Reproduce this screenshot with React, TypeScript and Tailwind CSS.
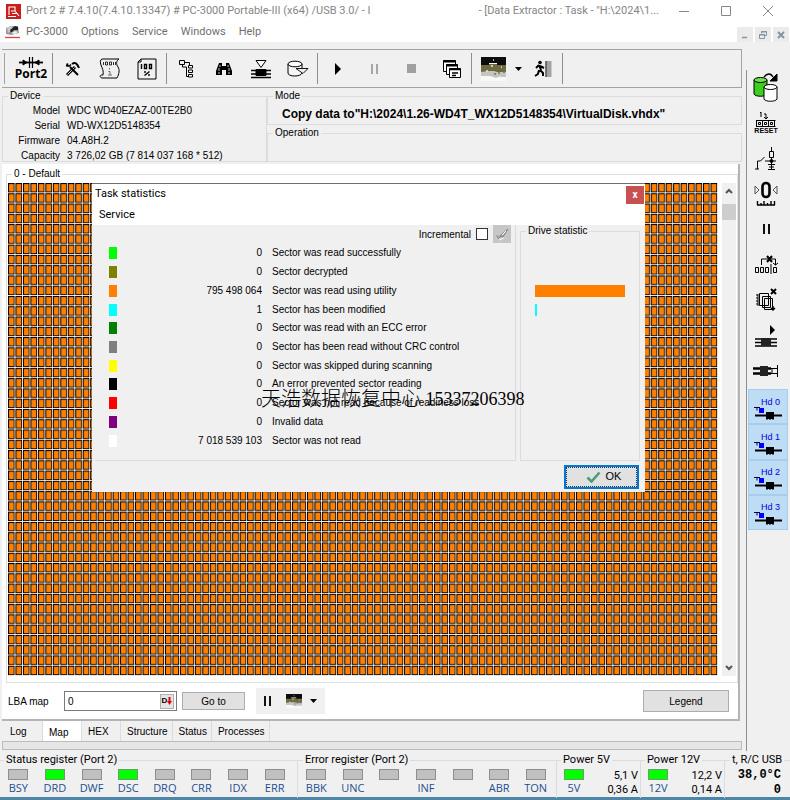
import React, { useState } from 'react';

const toolFont = 'font-["Liberation_Sans",Arial,sans-serif] text-[10px]';
const uiFont = 'font-[Roboto,"Segoe_UI",sans-serif] text-[11px]';

const sectors = [
  { color: 'bg-[#00ff00]', count: '0', label: 'Sector was read successfully' },
  { color: 'bg-[#808000]', count: '0', label: 'Sector decrypted' },
  { color: 'bg-[#ff8000]', count: '795 498 064', label: 'Sector was read using utility', bar: 'w-[90px]' },
  { color: 'bg-[#00ffff]', count: '1', label: 'Sector has been modified', bar: 'w-[2px]' },
  { color: 'bg-[#008000]', count: '0', label: 'Sector was read with an ECC error' },
  { color: 'bg-[#808080]', count: '0', label: 'Sector has been read without CRC control' },
  { color: 'bg-[#ffff00]', count: '0', label: 'Sector was skipped during scanning' },
  { color: 'bg-black', count: '0', label: 'An error prevented sector reading' },
  { color: 'bg-[#ff0000]', count: '0', label: 'Sector was not read because of readiness loss' },
  { color: 'bg-[#800080]', count: '0', label: 'Invalid data' },
  { color: 'bg-white', count: '7 018 539 103', label: 'Sector was not read' },
];

const device = [
  ['Model', 'WDC WD40EZAZ-00TE2B0'],
  ['Serial', 'WD-WX12D5148354'],
  ['Firmware', '04.A8H.2'],
  ['Capacity', '3 726,02 GB (7 814 037 168 * 512)'],
];

const statusBits = ['BSY', 'DRD', 'DWF', 'DSC', 'DRQ', 'CRR', 'IDX', 'ERR'];
const errorBits = ['BBK', 'UNC', '', 'INF', '', 'ABR', 'TON'];
const tabs = ['Log', 'Map', 'HEX', 'Structure', 'Status', 'Processes'];

function Svg({ w, h, children }: { w: number; h: number; children: React.ReactNode }) {
  return (
    <svg width={w} height={h} viewBox={`0 0 ${w} ${h}`} fill="none" stroke="#000" className="shrink-0" aria-hidden="true">
      {children}
    </svg>
  );
}

const AppIcon = () => (
  <Svg w={15} h={15}>
    <rect width="15" height="15" fill="#c81e1e" stroke="none" />
    <path d="M3 11V3h6v4H5M2 12.500h8M9 7l4 5M6 9.500h5" stroke="#fff" strokeWidth="1.1" />
  </Svg>
);

const DriveIcon = () => (
  <Svg w={16} h={14}>
    <path d="M1 3l5-2 7 0 1 7-8 2-5-1z" fill="#999" stroke="none" />
    <path d="M2 3l5-2 1 3-5 4z" fill="#ccc" stroke="none" />
    <path d="M5 5l5-4 3 1 0 3-4 0-3 3z" fill="#222" stroke="none" />
    <path d="M6 8l4-2 3 1-3 2z" fill="#eee" stroke="none" />
    <path d="M0 12.500h15" stroke="#e04040" strokeWidth="1.3" />
  </Svg>
);

const Port2Icon = () => (
  <Svg w={26} h={11}>
    <path d="M1 5.500h24" strokeWidth="1.8" />
    <path d="M5 3l4 2.500-4 2.500zM21 3l-4 2.500 4 2.500z" fill="#000" />
    <path d="M11.500 0v11M14.500 0v11" strokeWidth="1.2" />
  </Svg>
);

const ToolsIcon = () => (
  <Svg w={16} h={16}>
    <path d="M2 14l8-8" strokeWidth="3" />
    <path d="M2.500 13.500l7-7" stroke="#ddd" />
    <path d="M5 6l8 8" strokeWidth="2" />
    <path d="M1.500 5.500l1-3v2.500h2l1.500-1.500" strokeWidth="1.6" />
    <path d="M7 3c3-2 5-1 7 4" strokeWidth="2" />
  </Svg>
);

const ScrollIcon = () => (
  <Svg w={22} h={22}>
    <path d="M3 1h17c-3 2-3 5-1 8s1 7-1 11H3c-3-1-2-3 0-3h1c1-4-1-7-2-10S1 2 3 1z" />
    <path d="M4.500 4v3M6.500 4h2v3h-2zM10.500 4h2v3h-2zM14.500 4v3M16.500 4v3" strokeWidth=".8" />
    <path d="M10.500 10v1.500M9.500 13.500h1.500v3M9 17h4" stroke="#666" />
  </Svg>
);

const PercentIcon = () => (
  <Svg w={20} h={22}>
    <path d="M4 1h15v20H1V4z" />
    <path d="M1 4h3V1" />
    <path d="M4.500 6v5M7.500 6.500h2v4h-2zM12.500 6.500h2v4h-2z" strokeWidth="1.400" />
    <path d="M7.500 17.500l5-4M8 13v2M12 16v2" strokeWidth="1.400" />
  </Svg>
);

const TreeIcon = () => (
  <Svg w={17} h={19}>
    <path d="M1.500 1.500h5v4h-5zM4.500 5.500v2.500h4M8.500 8v9.500h2" />
    <path d="M10.500 6.500h4v2.500h-4zM10.500 11h4v2.500h-4zM10.500 15.500h4v2.500h-4z" fill="#fff" />
    <path d="M7 3.500h4.500V6" />
  </Svg>
);

const BinocularsIcon = () => (
  <Svg w={16} h={14}>
    <path d="M3 1h3v3h4V1h3l3 8v4h-6V8H6v5H0V9z" fill="#000" stroke="none" />
    <path d="M4 3v2M3 6v3M12 3v2M13 6v3M2 11h2M12 11h2" stroke="#ddd" strokeWidth=".9" />
  </Svg>
);

const FilterIcon = () => (
  <Svg w={22} h={20}>
    <path d="M6 1.500h10l-5 7z" fill="#fff" />
    <path d="M1 11.500h20M1 15h20M1 18.500h20" strokeWidth="1.700" />
    <path d="M6 10.500h10v6H6z" fill="#000" />
  </Svg>
);

const DbIcon = () => (
  <Svg w={22} h={17}>
    <path d="M1 4v9c0 4 13 4 14 0V4" fill="#f6f6f6" />
    <ellipse cx="8" cy="4" rx="7" ry="2.800" fill="#fff" />
    <path d="M9 8.500h12l-5 5z" fill="#eee" strokeWidth=".9" />
  </Svg>
);

const WindowsIcon = () => (
  <Svg w={19} h={20}>
    <path d="M1.500 1.500h12v11h-12z" fill="#fff" />
    <path d="M1 2.500h13" strokeWidth="2" />
    <path d="M4.500 5.500h11v10h-11z" fill="#fff" />
    <path d="M4 6.500h12" strokeWidth="2" />
    <path d="M7.500 9.500h11v9h-11z" fill="#fff" />
    <path d="M7 10.500h12M10 14h6M10 16.500h4" strokeWidth="1.500" />
  </Svg>
);

function PhotoIcon({ w, h }: { w: number; h: number }) {
  return (
    <svg width={w} height={h} viewBox="0 0 25 24" preserveAspectRatio="none" className="shrink-0" aria-hidden="true">
      <path d="M0 0h25v24H0z" fill="#f8f8f8" />
      <path d="M0 12h25v8h-8l-2 1-6-2H0z" fill="#c4c4c0" />
      <path d="M0 7h25v8h-9l-3-1H8l-8 1z" fill="#6d6a42" />
      <path d="M0 0h25v8h-9V6H8v2H0z" fill="#0c0c0c" />
      <path d="M5 14h2M10 9h2M12 3h1M20 10h1M18 20h2" stroke="#e8e8e8" strokeWidth="1.5" />
      <path d="M13 17h2M22 15h2M17 16h2" stroke="#77745a" strokeWidth="1.5" />
    </svg>
  );
}

const ExitIcon = () => (
  <Svg w={18} h={18}>
    <circle cx="6" cy="2.500" r="1.800" fill="#000" stroke="none" />
    <path d="M5 5l-3 3M5 5l2 5M6 6l4 2M6 10l3 3v3M5 10l-1 4-3 2" strokeWidth="2" />
    <path d="M12.500 1h5v16h-5z" fill="#a4a4a4" stroke="none" />
    <path d="M12 1v16" />
  </Svg>
);

const CopyDisksIcon = () => (
  <Svg w={26} h={30}>
    <path d="M1 7v14c1 3 12 3 13 0V7" fill="#3ad01c" />
    <ellipse cx="7.500" cy="7" rx="6.500" ry="2.500" fill="#6fe34f" />
    <path d="M11 14v12c1 3 12 3 13 0V14" fill="#fff" />
    <ellipse cx="17.500" cy="14" rx="6.500" ry="2.500" fill="#fff" />
    <path d="M11 4c3-4 7-4 9 0" strokeWidth="1.300" />
    <path d="M24 1v7h-7z" fill="#000" />
  </Svg>
);

const ResetIcon = () => (
  <Svg w={20} h={16}>
    <path d="M4 2l1-1v5M8 3h2v5M8 6l2 2 2-2" />
    <path d="M.5 9.500h19M.5 15.500h19M.5 9v7M6.500 9v7M12.500 9v7M18.500 9v7" />
    <path d="M2.500 11.500h2v2h-2zM8.500 11.500h2v2h-2zM14.500 11.500h2v2h-2z" />
  </Svg>
);

const CircuitIcon = () => (
  <Svg w={24} h={24}>
    <path d="M1 22h4M3.500 22v-8h3l4-4M11 14h11M17.500 0v4M15.500 4.500h4v6h-4zM17.500 10v13M14 17.500h7M15 20h5M14 22.500h7" />
    <circle cx="17.500" cy="14" r="1.500" fill="#000" />
  </Svg>
);

const ZeroIcon = () => (
  <Svg w={24} h={26}>
    <path d="M1 5l4 4-4 4zM23 5l-4 4 4 4z" stroke="#555" />
    <rect x="8.500" y="2" width="7" height="14" rx="3.500" strokeWidth="2.600" />
    <path d="M3 24h18M3.500 20v4M7 22v2M10 20v4M13.500 22v2M17 20v4M20.500 20v4" strokeWidth="1.400" />
  </Svg>
);

const PauseIcon = ({ color = '#111' }: { color?: string }) => (
  <Svg w={9} h={12}>
    <path d="M2 1v10M7 1v10" stroke={color} strokeWidth="2" />
  </Svg>
);

const MoveIcon = () => (
  <Svg w={23} h={19}>
    <path d="M.5 12.500h3v5h-3zM5.500 12.500h3v5h-3zM10.500 12.500h3v5h-3zM16 9v10M18.500 12.500h3v5h-3zM6.500 10V4h14v6M18 8l2.500 2L23 8" />
    <path d="M12 1l5 6M17 1l-5 6" strokeWidth="2" />
  </Svg>
);

const PagesIcon = () => (
  <Svg w={22} h={24}>
    <path d="M3 6v12M1 7h2M1 10h2M1 13h2M1 16h2" />
    <path d="M4.500 5.500h9v12h-9zM7.500 8.500h8v11h-8zM9.500 10.500h8v11h-8z" fill="#f0f0f0" />
    <path d="M16 1l5 5M21 1l-5 5" strokeWidth="2" />
    <path d="M18 18v4M16 20l2 2 2-2" strokeWidth="1.500" />
  </Svg>
);

const HeadsPlayIcon = () => (
  <Svg w={22} h={24}>
    <path d="M15 1l5 5-5 5z" fill="#000" stroke="none" />
    <path d="M0 15h22M0 18.500h22M0 22h22" strokeWidth="1.600" />
    <path d="M6 14h10v8H6z" fill="#222" stroke="none" />
  </Svg>
);

const HeadsParkIcon = () => (
  <Svg w={26} h={14}>
    <path d="M0 4.500h18M0 9.500h18" strokeWidth="2.400" />
    <path d="M7 2h8v10H7z" fill="#222" stroke="none" />
    <path d="M17 4.500h8M17 9.500h8M24.500 1v12M19 4v6" />
  </Svg>
);

const HeadIcon = () => (
  <Svg w={28} h={14}>
    <path d="M0 .5h6M3 .5v3" stroke="#003" />
    <path d="M5 1h5v5H5z" fill="#0000ff" stroke="none" />
    <path d="M1 8.500h27" strokeWidth="2" />
    <path d="M12 5h8v7h-8z" fill="#000" stroke="none" />
    <path d="M13 5v8M16 5v8M19 5v8" />
  </Svg>
);

function ToolButton({ label, children }: { label: string; children: React.ReactNode }) {
  return (
    <button aria-label={label} className="flex h-full w-[37px] shrink-0 items-center justify-center">
      {children}
    </button>
  );
}

const Sep = () => <span className="mx-px my-[3px] w-px shrink-0 bg-[#8e8e8e]" />;

function Led({ on, label }: { on?: boolean; label: string }) {
  return (
    <div className="flex flex-col items-center">
      <span className={`h-[11px] w-5 border ${on ? 'border-[#6c9c6c] bg-[#00ff00]' : 'border-[#8f8f8f] bg-[#c0c0c0]'}`} />
      <span className="h-4 font-['Open_Sans',sans-serif] text-[11px] leading-4 text-[#1f4e8f]">{label}</span>
    </div>
  );
}

function Power({ name, volts, amps }: { name: string; volts: string; amps: string }) {
  return (
    <fieldset className="min-w-0 border-t border-r border-[#dcdcdc] pr-[2px]">
      <legend className="ml-1 h-3 px-0.5 leading-3">Power {name}</legend>
      <div className="mt-[3px] flex justify-between pl-[7px]">
        <Led on label={name} />
        <div className="text-right leading-[14px] whitespace-nowrap">
          <div>{volts}</div>
          <div>{amps}</div>
        </div>
      </div>
    </fieldset>
  );
}

function SectorMap() {
  return (
    <svg viewBox="0 0 855 576" preserveAspectRatio="none" className="h-[493px] w-0 min-w-0 flex-1" role="img" aria-label="Sector map">
      <defs>
        <pattern id="cell" width="9" height="12" patternUnits="userSpaceOnUse">
          <rect width="9" height="12" fill="#fff" />
          <rect width="8" height="11" fill="#000" />
          <rect x="1.200" y="1.200" width="5.800" height="8.800" fill="#ff8000" />
        </pattern>
      </defs>
      <rect width="855" height="576" fill="url(#cell)" />
    </svg>
  );
}

function TaskStatistics() {
  const [incremental, setIncremental] = useState(false);

  return (
    <div role="dialog" aria-label="Task statistics" className="absolute top-0 left-[84px] w-[553px] border-t border-[#6f6f6f] bg-[#f0f0f0]">
      <div className={`bg-white text-black ${uiFont}`}>
        <div className="flex h-[21px] items-center justify-between pr-px pl-[3px]">
          <span>Task statistics</span>
          <button aria-label="Close" className="flex h-[18px] w-[18px] items-center justify-center bg-[#c75050] text-[10px] font-bold text-white">x</button>
        </div>
        <div className="flex h-5 items-center pl-[7px]">
          <button>Service</button>
        </div>
      </div>

      <div className="flex gap-1 pr-[5px] pl-[3px]">
        <div className="h-[236px] min-w-0 flex-1 border-r border-b border-[#dcdcdc]">
          <div className="flex h-[18px] items-center justify-end gap-[5px] pr-1">
            <label htmlFor="incremental">Incremental</label>
            <input
              id="incremental"
              type="checkbox"
              checked={incremental}
              onChange={(e) => setIncremental(e.target.checked)}
              className="h-3 w-3 appearance-none border border-[#333] bg-white checked:bg-[#555]"
            />
            <button aria-label="Clear" className="flex h-[18px] w-[18px] items-center justify-center bg-[#c6c6c6]">
              <Svg w={14} h={14}>
                <path d="M1.500 8.500l2 3 3-3M5 9l3 1 5-8-6 5z" fill="#aaa" stroke="#888" />
                <path d="M4 13l5-2M7 8l4-4" stroke="#fff" />
              </Svg>
            </button>
          </div>
          <table className="mt-px h-[206px] w-full border-collapse leading-[14px]">
            <tbody>
              {sectors.map((s) => (
                <tr key={s.label}>
                  <td className="w-[22px] p-0 pl-[14px]">
                    <span className={`block h-3 w-2 ${s.color}`} />
                  </td>
                  <td className="w-[145px] p-0 text-right">{s.count}</td>
                  <td className="p-0 pl-[10px]">{s.label}</td>
                </tr>
              ))}
            </tbody>
          </table>
        </div>

        <fieldset className="h-[236px] w-[120px] border border-[#dcdcdc]">
          <legend className="ml-[5px] h-3 px-0.5 leading-3">Drive statistic</legend>
          <div className="mt-[7px] grid h-[206px] grid-rows-11 items-center pl-[14px]">
            {sectors.map((s) => (
              <span key={s.label} className={`h-3 ${s.bar ? `${s.bar} ${s.color}` : ''}`} />
            ))}
          </div>
        </fieldset>
      </div>

      <div className="flex h-[31px] items-center justify-end pr-[6px]">
        <button className="h-6 w-[75px] border-2 border-[#0078d7] bg-[#e1e1e1]">
          <span className="flex h-full items-center justify-center gap-[5px] border border-dotted border-[#333] pl-1 text-[11px]">
            <Svg w={15} h={12}>
              <path d="M1.500 6.500l4 4L13.500 1.500" stroke="#4a9c7c" strokeWidth="2.600" />
            </Svg>
            OK
          </span>
        </button>
      </div>

      <div className="pointer-events-none absolute top-[203px] left-[169px] flex items-center font-['Liberation_Serif','Noto_Sans_CJK_SC',serif] text-lg leading-6 whitespace-pre text-black">
        <span className="text-xl leading-6 font-light">天浩数据恢复中心</span>
        <span> 15337206398</span>
      </div>
    </div>
  );
}

export default function App() {
  const [tab, setTab] = useState('Map');
  const [lba, setLba] = useState('0');

  return (
    <div className={`flex min-h-screen flex-col bg-[#f0f0f0] text-black ${toolFont}`}>
      <header className={`bg-white text-[#858585] ${uiFont}`}>
        <div className="flex h-[22px] items-center pr-px pl-[6px]">
          <AppIcon />
          <span className="ml-[5px] flex-1 whitespace-nowrap">Port 2 # 7.4.10(7.4.10.13347) # PC-3000 Portable-III (x64) /USB 3.0/ - I</span>
          <span className="mr-1 whitespace-nowrap">- [Data Extractor : Task - "H:\2024\1...</span>
          <button aria-label="Minimize" className="flex w-[42px] justify-center">
            <Svg w={10} h={10}><path d="M0 5.500h10" stroke="#888" /></Svg>
          </button>
          <button aria-label="Maximize" className="flex w-[42px] justify-center">
            <Svg w={10} h={10}><path d="M.5.5h9v9h-9z" stroke="#888" /></Svg>
          </button>
          <button aria-label="Close window" className="flex w-[42px] justify-center">
            <Svg w={10} h={10}><path d="M0 0l10 10M10 0L0 10" stroke="#888" /></Svg>
          </button>
        </div>
        <div className="flex h-5 items-end justify-between">
          <nav className="flex h-full items-center gap-[13px] pl-[5px] text-[#6f6f6f]">
            <span className="flex items-center gap-[5px]">
              <DriveIcon />
              <button>PC-3000</button>
            </span>
            <button>Options</button>
            <button>Service</button>
            <button>Windows</button>
            <button>Help</button>
          </nav>
          <div className="flex gap-[2px] pr-px">
            <button aria-label="Minimize task" className="flex h-[15px] w-4 items-center justify-center bg-[#ebebeb]">
              <Svg w={8} h={8}><path d="M1 6.500h5" stroke="#8494a8" strokeWidth="1.500" /></Svg>
            </button>
            <button aria-label="Restore task" className="flex h-[15px] w-4 items-center justify-center bg-[#ebebeb]">
              <Svg w={8} h={8}><path d="M2.500 2.500v-2h5v4h-2M.5 3.500h5v4h-5zM2 1h6M0 4h6" stroke="#8494a8" /></Svg>
            </button>
            <button aria-label="Close task" className="flex h-[15px] w-4 items-center justify-center bg-[#ebebeb]">
              <Svg w={8} h={8}><path d="M1 1l6 6M7 1L1 7" stroke="#8494a8" strokeWidth="2" /></Svg>
            </button>
          </div>
        </div>
      </header>

      <div className="flex flex-1">
        <main className="flex min-w-0 flex-1 flex-col pt-[7px] pr-1 pl-[2px]">
          <div className="flex h-[39px] border-y border-r border-[#a3a3a3] pl-[2px]">
            <span className="my-[3px] w-px bg-[#a3a3a3]" />
            <button className="flex w-[46px] flex-col items-center justify-center pl-[6px] font-['Open_Sans',sans-serif] text-[12px] leading-[12px] font-bold">
              <Port2Icon />
              Port2
            </button>
            <Sep />
            <ToolButton label="Utilities"><ToolsIcon /></ToolButton>
            <ToolButton label="Script"><ScrollIcon /></ToolButton>
            <ToolButton label="Progress"><PercentIcon /></ToolButton>
            <Sep />
            <ToolButton label="Tree"><TreeIcon /></ToolButton>
            <ToolButton label="Find"><BinocularsIcon /></ToolButton>
            <ToolButton label="Heads filter"><FilterIcon /></ToolButton>
            <ToolButton label="Export"><DbIcon /></ToolButton>
            <Sep />
            <ToolButton label="Start"><Svg w={8} h={12}><path d="M1 0l6 6-6 6z" fill="#000" stroke="none" /></Svg></ToolButton>
            <ToolButton label="Pause"><PauseIcon color="#a6a6a6" /></ToolButton>
            <ToolButton label="Stop"><span className="h-[9px] w-[9px] bg-[#a0a0a0]" /></ToolButton>
            <span className="w-[3px]" />
            <ToolButton label="Windows"><WindowsIcon /></ToolButton>
            <Sep />
            <button aria-label="Map view" className="flex w-[40px] items-center justify-center"><PhotoIcon w={25} h={24} /></button>
            <button aria-label="Map view options" className="flex w-[11px] items-center justify-center">
              <Svg w={7} h={4}><path d="M0 0h7L3.500 4z" fill="#000" stroke="none" /></Svg>
            </button>
            <ToolButton label="Exit"><ExitIcon /></ToolButton>
            <Sep />
          </div>

          <div className="mt-[2px] flex">
            <fieldset className="h-[72px] w-[265px] border border-[#dcdcdc]">
              <legend className="ml-[5px] h-3 px-0.5 leading-3">Device</legend>
              <dl className="grid grid-cols-[57px_1fr] gap-x-[7px] pt-px leading-[15px]">
                {device.map(([name, value]) => (
                  <React.Fragment key={name}>
                    <dt className="text-right">{name}</dt>
                    <dd className="whitespace-nowrap">{value}</dd>
                  </React.Fragment>
                ))}
              </dl>
            </fieldset>
            <div className="flex min-w-0 flex-1 flex-col gap-[2px]">
              <fieldset className="h-[35px] min-w-0 border border-[#dcdcdc]">
                <legend className="ml-[5px] h-3 px-0.5 leading-3">Mode</legend>
                <p className="pt-[4px] pl-[14px] text-[12px] leading-4 font-bold whitespace-nowrap text-black">Copy data to"H:\2024\1.26-WD4T_WX12D5148354\VirtualDisk.vhdx"</p>
              </fieldset>
              <fieldset className="h-[35px] border border-[#dcdcdc]">
                <legend className="ml-[5px] h-3 px-0.5 leading-3">Operation</legend>
              </fieldset>
            </div>
          </div>

          <section className="mt-[2px] mr-[2px] border-r-2 border-b-2 border-[#b4b4b4] bg-white pt-1 pl-1">
            <fieldset className="min-w-0 border border-[#e0e0e0] pr-px pb-[6px] pl-px">
              <legend className="ml-1 h-3 px-[2px] leading-3">0 - Default</legend>
              <div className="relative mt-[3px] flex">
                <SectorMap />
                <div className="ml-1 flex w-[14px] flex-col items-center justify-between bg-[#f0f0f0] py-[5px]">
                  <div className="flex flex-col items-center gap-[10px]">
                    <Svg w={8} h={6}><path d="M1 5l3-3 3 3" stroke="#555" strokeWidth="2" /></Svg>
                    <span className="h-4 w-[14px] bg-[#cdcdcd]" />
                  </div>
                  <Svg w={8} h={6}><path d="M1 1l3 3 3-3" stroke="#555" strokeWidth="2" /></Svg>
                </div>
                <TaskStatistics />
              </div>
            </fieldset>
            <div className="flex h-[36px] items-center pr-[9px] pl-[2px]">
              <label htmlFor="lba" className="w-[56px]">LBA map</label>
              <div className="flex h-5 w-[113px] items-center border border-[#7a7a7a] bg-white pr-[2px]">
                <input id="lba" value={lba} onChange={(e) => setLba(e.target.value)} className="min-w-0 flex-1 pl-[3px] outline-none" />
                <button aria-label="Decimal" className="flex h-[15px] w-[14px] items-center justify-center border border-[#b0b0b0] bg-[#e4e4e4] text-[8px] font-bold">
                  D
                  <Svg w={5} h={8}><path d="M1.500 0h2v4H5L2.500 8 0 4h1.500z" fill="#e00000" stroke="none" /></Svg>
                </button>
              </div>
              <button className="ml-[5px] h-[18px] w-[63px] border border-[#adadad] bg-[#e1e1e1]">Go to</button>
              <div className="ml-[11px] flex h-[26px] w-[69px] items-center gap-[14px] bg-[#f0f0f0] pl-[7px]">
                <button aria-label="Pause map"><PauseIcon /></button>
                <button aria-label="Map options" className="flex items-center gap-[8px]">
                  <PhotoIcon w={16} h={14} />
                  <Svg w={7} h={4}><path d="M0 0h7L3.500 4z" fill="#000" stroke="none" /></Svg>
                </button>
              </div>
              <button className="ml-auto h-[22px] w-[86px] border border-[#adadad] bg-[#e1e1e1]">Legend</button>
            </div>
          </section>

          <div className="flex h-5 pl-[2px]" role="tablist">
            {tabs.map((t) => (
              <button
                key={t}
                role="tab"
                aria-selected={tab === t}
                onClick={() => setTab(t)}
                className={`min-w-[39px] border-r border-[#dcdcdc] pr-1 pl-[6px] text-left ${tab === t ? 'bg-white pt-[3px]' : ''}`}
              >
                {t}
              </button>
            ))}
          </div>
          <div className="h-[9px] border border-[#bcbcbc] bg-[#e6e6e6]" />
        </main>

        <aside className="mt-[28px] w-[44px] border-l border-[#8e8e8e] pr-[2px] pl-px">
          <div className="grid h-[319px] grid-rows-9 [&>button]:flex [&>button]:flex-col [&>button]:items-center [&>button]:justify-center [&>button]:pr-1">
            <button aria-label="Copy disks"><CopyDisksIcon /></button>
            <button>
              <ResetIcon />
              <span className="text-[7px] leading-[8px] font-bold">RESET</span>
            </button>
            <button aria-label="Power control"><CircuitIcon /></button>
            <button aria-label="Recalibrate"><ZeroIcon /></button>
            <button aria-label="Pause drive"><PauseIcon /></button>
            <button aria-label="Skip sectors"><MoveIcon /></button>
            <button aria-label="Clear pages"><PagesIcon /></button>
            <button aria-label="Start heads"><HeadsPlayIcon /></button>
            <button aria-label="Park heads"><HeadsParkIcon /></button>
          </div>
          <div className="grid h-[141px] grid-rows-4">
            {['Hd 0', 'Hd 1', 'Hd 2', 'Hd 3'].map((h) => (
              <button key={h} className="flex flex-col items-center justify-center border border-[#a6cdec] bg-[#bfdcf5] pt-1 text-[9px] leading-[10px] text-[#0000e0]">
                <span className="self-end pr-[7px]">{h}</span>
                <HeadIcon />
              </button>
            ))}
          </div>
        </aside>
      </div>

      <footer className={`grid h-[49px] grid-cols-[298fr_259fr_84fr_84fr_65fr] border-b-3 border-[#4f86a8] pt-[3px] ${uiFont}`}>
        <fieldset className="min-w-0 border-t border-r border-[#dcdcdc]">
          <legend className="ml-1 h-3 px-0.5 leading-3">Status register (Port 2)</legend>
          <div className="mt-[3px] grid grid-cols-8 pr-1">
            {statusBits.map((b) => <Led key={b} label={b} on={b === 'DRD' || b === 'DSC'} />)}
          </div>
        </fieldset>
        <fieldset className="min-w-0 border-t border-r border-[#dcdcdc]">
          <legend className="ml-[5px] h-3 px-0.5 leading-3">Error register (Port 2)</legend>
          <div className="mt-[3px] grid grid-cols-7 pr-[2px]">
            {errorBits.map((b, i) => <Led key={i} label={b} />)}
          </div>
        </fieldset>
        <Power name="5V" volts="5,1 V" amps="0,36 A" />
        <Power name="12V" volts="12,2 V" amps="0,14 A" />
        <fieldset className="min-w-0 border-t border-[#dcdcdc] pr-[9px]">
          <legend className="ml-[5px] h-3 px-0.5 leading-3 whitespace-nowrap">t, R/C USB</legend>
          <div className="mt-[2px] text-right font-['Liberation_Mono',monospace] text-[12px] leading-[15px] font-bold whitespace-nowrap text-black">
            <div>38,0°C</div>
            <div>0</div>
          </div>
        </fieldset>
      </footer>
    </div>
  );
}
